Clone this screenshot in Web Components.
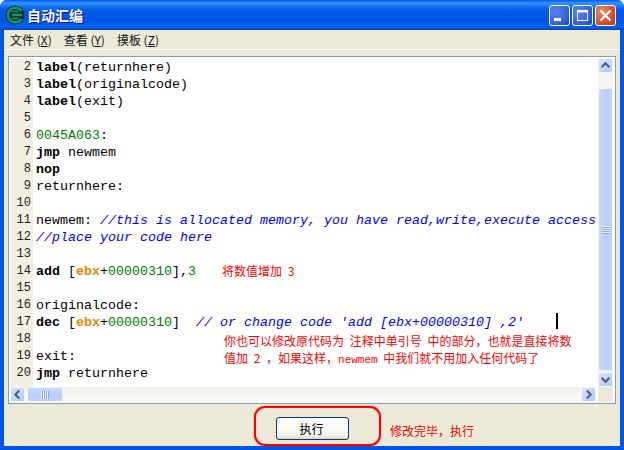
<!DOCTYPE html>
<html><head><meta charset="utf-8">
<style>
html,body{margin:0;padding:0;background:#fff;overflow:hidden}
</style></head>
<body>
<xp-window title-text="自动汇编">
  <xp-menubar>
    <xp-menu-item>文件 (<u>X</u>)</xp-menu-item>
    <xp-menu-item>查看 (<u>Y</u>)</xp-menu-item>
    <xp-menu-item>摸板 (<u>Z</u>)</xp-menu-item>
  </xp-menubar>
  <code-editor id="ed"></code-editor>
  <xp-footer>
    <xp-button>执行</xp-button>
    <red-note slot="note">修改完毕，执行</red-note>
  </xp-footer>
</xp-window>
<script>
const CJK='"Noto Sans CJK SC","Liberation Sans",sans-serif';
class Base extends HTMLElement{
  render(html){this.attachShadow({mode:'open'}).innerHTML=html;}
}
class XpWindow extends Base{connectedCallback(){if(this.shadowRoot)return;
  const t=this.getAttribute('title-text');
  this.render(`<style>
  :host{display:flex;flex-direction:column;width:624px;height:450px;box-sizing:border-box;border-radius:7px 7px 0 0;overflow:hidden;background:#0055e5;font-family:${CJK}}
  .bar{height:30px;flex:none;display:flex;align-items:center;padding:0 8px 0 5px;box-sizing:border-box;
    background:linear-gradient(to bottom,#0058ee 0,#3593ff 3px,#288eff 4px,#0f6ef0 7px,#0058e4 11px,#0055e5 22px,#0362f0 26px,#0450d0 29px,#003dad 30px)}
  .ic{width:20px;height:20px;flex:none}
  .t{margin-left:2px;color:#fff;font-weight:700;font-size:14px;line-height:20px;flex:1;text-shadow:1px 1px 0 #0f1089}
  .btns{display:flex;gap:2px}
  .client{flex:1;display:flex;flex-direction:column;background:#ece9d8;margin:0 4px 4px;min-height:0}
  .btn{width:21px;height:21px;box-sizing:border-box;border:1px solid #fff;border-radius:3px;display:block}
  .blue{background:radial-gradient(circle at 30% 30%,#5c85ee 0,#3a68e0 55%,#1c42b8 100%)}
  .red{background:radial-gradient(circle at 30% 30%,#e8906e 0,#d9552e 55%,#b83410 100%)}
  .btn svg{display:block;width:19px;height:19px}
  </style>
  <div class="bar">
    <svg class="ic" viewBox="0 0 20 20"><circle cx="10" cy="10" r="9.5" fill="#0b2b2b"/><path d="M16.5 6C15 3.9 12.7 2.7 10 2.7 6 2.7 2.8 6 2.8 10s3.2 7.3 7.2 7.3c2.7 0 5-1.2 6.5-3.3" fill="none" stroke="#109a68" stroke-width="2.6"/><path d="M7 10h10" stroke="#109a68" stroke-width="2.4"/><path d="M6.5 6.5h7" stroke="#109a68" stroke-width="1.6"/><path d="M6.5 13.5h7" stroke="#109a68" stroke-width="1.6"/></svg>
    <div class="t">${t}</div>
    <div class="btns">
      <span class="btn blue"><svg viewBox="0 0 19 19"><rect x="4" y="12" width="7" height="3" fill="#fff"/></svg></span>
      <span class="btn blue"><svg viewBox="0 0 19 19"><rect x="4.5" y="4.5" width="10" height="10" fill="none" stroke="#fff"/><rect x="4" y="4" width="11" height="2.4" fill="#fff"/></svg></span>
      <span class="btn red"><svg viewBox="0 0 19 19"><path d="M4.5 4.5l10 10M14.5 4.5l-10 10" stroke="#fff" stroke-width="2.2"/></svg></span>
    </div>
  </div>
  <div class="client"><slot></slot></div>`);
}}
class XpMenubar extends Base{connectedCallback(){if(this.shadowRoot)return;
  this.render(`<style>:host{display:flex;flex:none;height:19px;gap:12px;padding-left:6px;align-items:center;background:#ece9d8;border-bottom:1px solid #fff;margin-bottom:6px}</style><slot></slot>`);
}}
class XpMenuItem extends Base{connectedCallback(){if(this.shadowRoot)return;
  this.render(`<style>:host{display:block;font-size:12px;line-height:18px;color:#111;white-space:nowrap}</style><slot></slot>`);
}}
class XpSbButton extends Base{connectedCallback(){if(this.shadowRoot)return;
  const d={up:'M3 9.5l4.5-4.5 4.5 4.5',down:'M3 5.5l4.5 4.5 4.5-4.5',left:'M9.5 3L5 7.5l4.5 4.5',right:'M5.5 3L10 7.5 5.5 12'}[this.getAttribute('dir')];
  this.render(`<style>:host{display:block;flex:none;width:15px;height:15px;box-sizing:border-box;border:1px solid #f2f6fe;border-radius:2px;background:linear-gradient(135deg,#d8e3fb,#b4c8f6)}
  svg{display:block;width:13px;height:13px}</style><svg viewBox="0 0 15 15"><path d="${d}" fill="none" stroke="#4d6185" stroke-width="2.4"/></svg>`);
}}
class XpThumb extends Base{connectedCallback(){if(this.shadowRoot)return;
  const h=this.hasAttribute('horizontal');
  this.render(`<style>:host{display:flex;align-items:center;justify-content:center;box-sizing:border-box;border:1px solid #eef3fe;border-radius:2px;
   background:linear-gradient(${h?'180deg':'90deg'},#cad9fb,#b9ccf8 60%,#c6d6fb)}
   i{display:block;${h?'width:8px;height:8px;background:repeating-linear-gradient(90deg,#eef3fe 0 1px,#8ba6e0 1px 2px)':'width:8px;height:8px;background:repeating-linear-gradient(180deg,#eef3fe 0 1px,#8ba6e0 1px 2px)'}}
   </style><i></i>`);
}}
class CodeLine extends Base{connectedCallback(){if(this.shadowRoot)return;
  const n=this.getAttribute('n');
  this.render(`<style>:host{display:flex;height:17px;line-height:17px;white-space:pre}
  .n{width:21px;flex:none;text-align:right;font:12px/17px "Liberation Mono",monospace;color:#222;padding-right:2px;box-sizing:content-box}
  .c{margin-left:3px;font:13.33px/17px "Liberation Mono",monospace;color:#000;flex:none}
  </style><div class="n">${n}</div><div class="c"><slot></slot></div>`);
}}
class RedNote extends Base{connectedCallback(){if(this.shadowRoot)return;
  this.render(`<style>:host{display:inline-block;color:#f00;font:12px/17px ${CJK};white-space:pre;word-spacing:3px}</style><slot></slot>`);
}}
class CodeEditor extends Base{connectedCallback(){if(this.shadowRoot)return;
  const k=s=>`<b>${s}</b>`,g=s=>`<span style="color:#008000">${s}</span>`,o=s=>`<b style="color:#e58a00">${s}</b>`,c=s=>`<i style="color:#00f">${s}</i>`;
  const lines=[
   [2,k('label')+'(returnhere)'],[3,k('label')+'(originalcode)'],[4,k('label')+'(exit)'],[5,''],
   [6,g('0045A063')+':'],[7,k('jmp')+' newmem'],[8,k('nop')],[9,'returnhere:'],[10,''],
   [11,'newmem: '+c('//this is allocated memory, you have read,write,execute access')],
   [12,c('//place your code here')],[13,''],
   [14,k('add')+' ['+o('ebx')+'+'+g('00000310')+'],'+g('3')],
   [15,''],[16,'originalcode:'],
   [17,k('dec')+' ['+o('ebx')+'+'+g('00000310')+']  '+c("// or change code 'add [ebx+00000310] ,2'")],
   [18,''],[19,'exit:'],[20,k('jmp')+' returnhere']];
  this.render(`<style>
  :host{display:grid;flex:none;position:relative;box-sizing:border-box;width:608px;height:348px;margin:0 0 0 4px;border:1px solid #7f9db9;background:#fff;padding:1px;
    grid-template-columns:586px 15px;grid-template-rows:1fr 15px;column-gap:2px}
  .code{grid-column:1;grid-row:1;overflow:hidden;min-width:0;padding-top:1px;background:linear-gradient(to right,#f1efe2 23px,#fff 23px);position:relative}
  .v{grid-column:2;grid-row:1;display:flex;flex-direction:column;background:#f5f4ee}
  .v .th{flex:1;margin:15px 0 1px}
  .h{grid-column:1;grid-row:2;display:flex;align-items:stretch;background:linear-gradient(to bottom,#f1efe7,#fdfdfb)}
  .h .th{width:36px;margin-left:2px}
  .h .sp{flex:1}
  .corner{background:#ece9d8;grid-column:2;grid-row:2}
  .note{position:absolute;left:214px;top:274px;line-height:17px}
  .note14{position:absolute;left:212px;top:204px}
  .caret{position:absolute;left:546px;top:255px;width:2px;height:16px;background:#000}
  </style>
  <div class="code">${lines.map(([n,h])=>`<code-line n="${n}">${h}</code-line>`).join('')}
    <div class="caret"></div>
    <red-note class="note14">将数值增加 3</red-note>
    <red-note class="note">你也可以修改原代码为 注释中单引号 中的部分，也就是直接将数
值加 2 ，如果这样，<span style="font:11px 'Liberation Mono',monospace">newmem</span> 中我们就不用加入任何代码了</red-note>
  </div>
  <div class="v"><xp-sb-button dir="up"></xp-sb-button><xp-thumb class="th"></xp-thumb><xp-sb-button dir="down"></xp-sb-button></div>
  <div class="h"><xp-sb-button dir="left"></xp-sb-button><xp-thumb class="th" horizontal></xp-thumb><div class="sp"></div><xp-sb-button dir="right"></xp-sb-button></div>
  <div class="corner"></div>`);
}}
class XpFooter extends Base{connectedCallback(){if(this.shadowRoot)return;
  this.render(`<style>:host{flex:1;display:flex;align-items:flex-start;padding-left:250px;min-height:0}
  .ring{box-sizing:border-box;width:127px;height:40px;margin-top:2px;border:2px solid #f00;border-radius:11px;display:flex;align-items:center;padding:5px 0 0 20px;box-shadow:0 0 1px #f00}
  .note{margin:13px 0 0 9px}</style>
  <div class="ring"><slot></slot></div><div class="note"><slot name="note"></slot></div>`);
}}
class XpButton extends Base{connectedCallback(){if(this.shadowRoot)return;
  this.render(`<style>:host{display:flex;align-items:center;justify-content:center;box-sizing:border-box;width:73px;height:23px;padding-right:2px;border:1px solid #003c74;border-radius:3px;
   background:linear-gradient(to bottom,#fff,#f4f4ef 80%,#dcd8ca);font-size:12px;color:#000}</style><slot></slot>`);
}}
const defs={'xp-window':XpWindow,'xp-menubar':XpMenubar,'xp-menu-item':XpMenuItem,'xp-sb-button':XpSbButton,'xp-thumb':XpThumb,'code-line':CodeLine,'red-note':RedNote,'code-editor':CodeEditor,'xp-footer':XpFooter,'xp-button':XpButton};
for(const n in defs)customElements.define(n,defs[n]);
</script>
</body></html>
